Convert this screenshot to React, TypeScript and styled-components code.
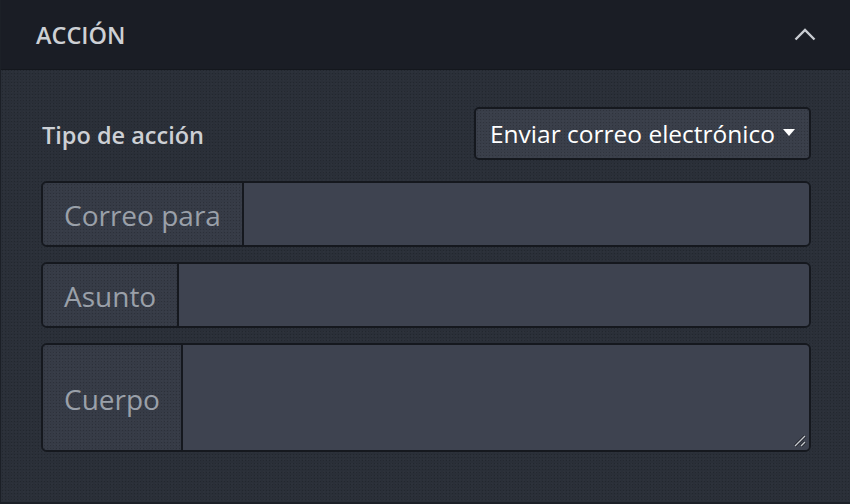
import styled, { createGlobalStyle } from 'styled-components';

const GlobalStyle = createGlobalStyle`
  html, body {
    margin: 0;
    padding: 0;
    background: #2a2f38;
  }
  body {
    font-family: 'Open Sans', 'Noto Sans', sans-serif;
  }
`;

const noise = `
  radial-gradient(rgba(0, 0, 0, 0.18) 0.6px, transparent 0.9px) 0 0 / 3px 3px,
  radial-gradient(rgba(255, 255, 255, 0.025) 0.6px, transparent 0.9px) 1px 2px / 4px 4px
`;

const Panel = styled.section`
  width: 850px;
  height: 504px;
  box-sizing: border-box;
  border-left: 1px solid #1c2027;
  border-bottom: 2px solid #1c2027;
  background: ${noise}, #2a2f38;
  display: flex;
  flex-direction: column;
`;

const Header = styled.header`
  height: 70px;
  box-sizing: border-box;
  background: #1a1d25;
  border-bottom: 1px solid #14171d;
  display: flex;
  align-items: center;
  justify-content: space-between;
  padding: 0 34px 0 35px;
`;

const HeaderTitle = styled.h2`
  margin: 0;
  font-size: 23.5px;
  font-weight: 600;
  color: #cdd0d5;
`;

const Body = styled.div`
  display: flex;
  flex-direction: column;
  gap: 15px;
  padding: 37px 39px 0 40px;
`;

const TypeRow = styled.div`
  display: flex;
  align-items: center;
  justify-content: space-between;
  margin-bottom: 6px;
`;

const FieldLabel = styled.span`
  font-size: 23.5px;
  font-weight: 600;
  color: #cdd0d5;
  padding: 3px 0 0 1px;
`;

const SelectButton = styled.button`
  height: 53px;
  box-sizing: border-box;
  display: flex;
  align-items: center;
  gap: 8px;
  padding: 0 14px 0 14px;
  background: ${noise}, #393e49;
  border: 2px solid #15181e;
  border-radius: 5px;
  font-family: inherit;
  font-size: 24.5px;
  color: #ffffff;
  cursor: pointer;
`;

const Caret = styled.span`
  width: 0;
  height: 0;
  border-left: 6.5px solid transparent;
  border-right: 6.5px solid transparent;
  border-top: 7px solid #ffffff;
  margin-top: -2px;
`;

const Group = styled.div<{ $height: number }>`
  display: flex;
  height: ${(p) => p.$height}px;
  box-sizing: border-box;
  border: 2px solid #15181e;
  border-radius: 6px;
  overflow: hidden;
  position: relative;
`;

const Addon = styled.label<{ $width: number }>`
  width: ${(p) => p.$width}px;
  flex-shrink: 0;
  box-sizing: border-box;
  display: flex;
  align-items: center;
  padding: 2px 0 0 21px;
  background: ${noise}, #363b46;
  border-right: 2px solid #15181e;
  font-size: 28px;
  color: #9aa0a9;
`;

const TextInput = styled.input`
  flex: 1;
  border: none;
  outline: none;
  background: #3e4350;
  font-family: inherit;
  font-size: 24px;
  color: #ffffff;
  padding: 0 14px;
`;

const TextArea = styled.textarea`
  flex: 1;
  border: none;
  outline: none;
  resize: none;
  background: #3e4350;
  font-family: inherit;
  font-size: 24px;
  color: #ffffff;
  padding: 10px 14px;
`;

const Grip = styled.svg`
  position: absolute;
  right: 2px;
  bottom: 2px;
`;

export default function App() {
  return (
    <>
      <GlobalStyle />
      <Panel>
        <Header>
          <HeaderTitle>ACCIÓN</HeaderTitle>
          <svg width="22" height="13" viewBox="0 0 22 13" fill="none">
            <path d="M1.5 11.5 L11 2 L20.5 11.5" stroke="#c9ccd2" strokeWidth="2.4" />
          </svg>
        </Header>
        <Body>
          <TypeRow>
            <FieldLabel>Tipo de acción</FieldLabel>
            <SelectButton>
              Enviar correo electrónico
              <Caret />
            </SelectButton>
          </TypeRow>
          <Group $height={66}>
            <Addon $width={201}>Correo para</Addon>
            <TextInput />
          </Group>
          <Group $height={66}>
            <Addon $width={136}>Asunto</Addon>
            <TextInput />
          </Group>
          <Group $height={109}>
            <Addon $width={140}>Cuerpo</Addon>
            <TextArea />
            <Grip width="14" height="14" viewBox="0 0 14 14">
              <path d="M2 12 L12 2 M8 12 L12 8" stroke="#1a1d23" strokeWidth="3" />
              <path d="M2 12 L12 2 M8 12 L12 8" stroke="#c5c9cf" strokeWidth="1.4" />
            </Grip>
          </Group>
        </Body>
      </Panel>
    </>
  );
}
